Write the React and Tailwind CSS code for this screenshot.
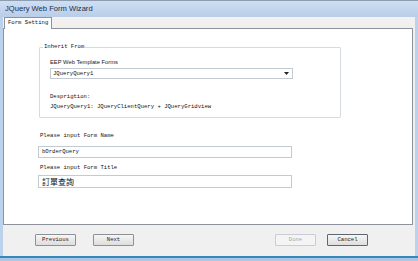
import React from "react"

const mono = { fontFamily: '"Liberation Mono", "DejaVu Sans Mono", monospace' }

function WinButton({ label, disabled, focused }) {
    return (
        <button
            disabled={disabled}
            style={mono}
            className={`h-[12px] w-[41px] rounded-[1px] border text-[5.6px] leading-none ${disabled ? "border-[#c9cdd3] bg-[#f4f4f4] text-[#a8a8a8]" : focused ? "border-[#5e6670] bg-gradient-to-b from-[#f6f6f6] to-[#dedede] text-[#222]" : "border-[#8d9096] bg-gradient-to-b from-[#f6f6f6] to-[#dddddd] text-[#222]"}`}
        >
            {label}
        </button>
    )
}

export default function App() {
    return (
        <div className="w-[418px] h-[261px] flex flex-col bg-[#c3d6ee] overflow-hidden">
            {/* title bar */}
            <div className="h-[17px] shrink-0 border-t border-[#8f9db1] bg-gradient-to-b from-[#cedff4] to-[#b9cde8] flex items-center pl-[5px]">
                <span className="text-[7.6px] text-[#1e2d44]" style={{ fontFamily: '"Liberation Sans", Arial, sans-serif' }}>JQuery Web Form Wizard</span>
            </div>

            <div className="flex flex-1 min-h-0">
                <div className="w-[3px] shrink-0 bg-[#bcd2ec]" />
                <div className="flex-1 flex flex-col bg-[#f0f0f0] min-w-0">
                    {/* tab strip */}
                    <div className="h-[11px] shrink-0 flex items-end bg-gradient-to-b from-[#f3f2f1] to-[#f0efee]">
                        <div className="ml-[1px] h-[12px] px-[3px] mb-[-1px] border border-b-0 border-[#8e939b] bg-white flex items-center relative z-10" style={mono}>
                            <span className="text-[5.6px] text-[#111]">Form Setting</span>
                        </div>
                    </div>

                    {/* panel */}
                    <div className="h-[197px] shrink-0 mr-[2px] border border-[#8e939b] bg-white">
                        <div className="ml-[35px] mt-[18px] w-[302px] h-[71px] border border-[#d6dbe0] rounded-[1px] relative" style={mono}>
                            <span className="absolute left-[3px] top-[-4px] bg-white px-[1px] text-[5.6px] leading-none text-[#111]">Inherit From</span>
                            <div className="pl-[10px] pt-[12px]">
                                <div className="text-[5.8px] leading-none text-[#222]" style={{ fontFamily: '"Liberation Sans", Arial, sans-serif' }}>EEP Web Template Forms</div>
                                <div className="mt-[2px] w-[243px] h-[11px] border border-[#c4cad2] bg-white flex items-center justify-between pl-[2px] pr-[3px]">
                                    <span className="text-[5.6px] leading-none text-[#111]">JQueryQuery1</span>
                                    <svg width="5" height="3" viewBox="0 0 5 3"><path d="M0 0h5L2.5 3z" fill="#222" /></svg>
                                </div>
                                <div className="mt-[15px] text-[5.6px] leading-none text-[#111]">Desprigtion:</div>
                                <div className="mt-[5px] text-[5.6px] leading-none text-[#111] whitespace-nowrap">JQueryQuery1: JQueryClientQuery + JQueryGridview</div>
                            </div>
                        </div>

                        <div className="ml-[34px] mt-[15px] w-[254px]" style={mono}>
                            <div className="ml-[2px] text-[5.6px] leading-none text-[#111]">Please input Form Name</div>
                            <div className="mt-[7px] h-[12px] border border-[#c4cad2] flex items-center pl-[3px]">
                                <span className="text-[5.6px] leading-none text-[#111]">bOrderQuery</span>
                            </div>
                            <div className="mt-[7px] ml-[2px] text-[5.6px] leading-none text-[#111]">Please input Form Title</div>
                            <div className="mt-[5px] h-[13px] border border-[#c4cad2] flex items-center pl-[3px]">
                                <span className="text-[8px] leading-none text-[#111]" style={{ fontFamily: '"Noto Sans CJK TC", "Noto Sans CJK SC", sans-serif' }}>訂單查詢</span>
                            </div>
                        </div>
                    </div>

                    {/* button bar */}
                    <div className="flex-1 flex items-start pt-[9px] pl-[32px] pr-[47px]">
                        <WinButton label="Previous" />
                        <div className="w-[17px]" />
                        <WinButton label="Next" />
                        <div className="flex-1" />
                        <WinButton label="Done" disabled />
                        <div className="w-[11px]" />
                        <WinButton label="Cancel" focused />
                    </div>
                </div>
                <div className="w-[3px] shrink-0 bg-[#bcd2ec]" />
            </div>

            {/* bottom frame */}
            <div className="h-[5px] shrink-0 border-t-2 border-[#3b86b8] bg-[#a9c8e6]" />
        </div>
    )
}
